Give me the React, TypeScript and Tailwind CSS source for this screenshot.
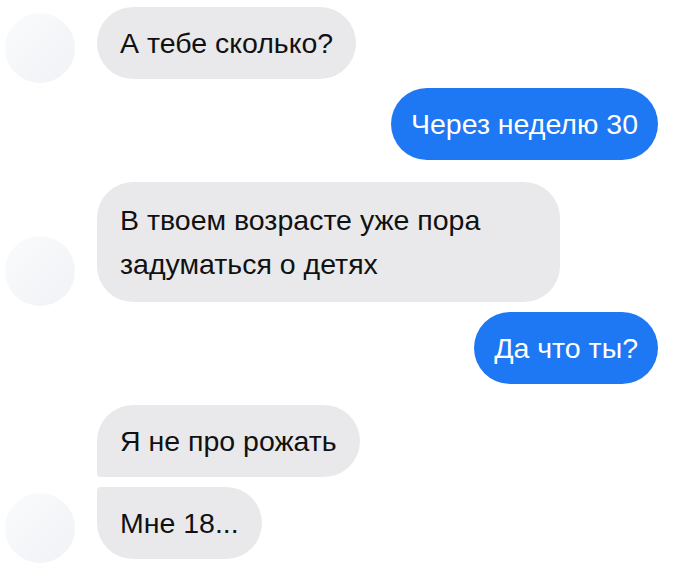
import React from "react";

type Msg = {
  text: string[];
  mine?: boolean;
  avatar?: boolean;
  extra?: string;
  gap: string;
};

const messages: Msg[] = [
  { text: ["А тебе сколько?"], avatar: true, gap: "mt-[7px]" },
  { text: ["Через неделю 30"], mine: true, gap: "mt-[9px]" },
  {
    text: ["В твоем возрасте уже пора", "задуматься о детях"],
    avatar: true,
    extra: "w-[463px] py-[16px]",
    gap: "mt-[22px]",
  },
  { text: ["Да что ты?"], mine: true, gap: "mt-[10px]" },
  { text: ["Я не про рожать"], extra: "rounded-bl-[4px]", gap: "mt-[21px]" },
  {
    text: ["Мне 18..."],
    avatar: true,
    extra: "rounded-tl-[4px]",
    gap: "mt-[10px]",
  },
];

function Avatar({ show }: { show?: boolean }) {
  if (!show) return <div className="w-[70px] shrink-0" />;
  return (
    <div className="w-[70px] h-[70px] shrink-0 rounded-full bg-gradient-to-br from-[#fafbfc] to-[#f0f2f6] mb-[-4px]" />
  );
}

function Bubble({ msg }: { msg: Msg }) {
  const tone = msg.mine
    ? "bg-[#1e77f3] text-white px-[20px]"
    : "bg-[#e9e9eb] text-[#111111] px-[23px]";
  return (
    <div
      className={`rounded-[36px] py-[14px] text-[28.5px] leading-[44px] ${tone} ${msg.extra ?? ""}`}
    >
      {msg.text.map((line) => (
        <div key={line} className="whitespace-nowrap">
          {line}
        </div>
      ))}
    </div>
  );
}

export default function App() {
  return (
    <div
      className="w-[700px] h-[580px] bg-white overflow-hidden flex flex-col"
      style={{ fontFamily: '"Liberation Sans", Arial, sans-serif' }}
    >
      {messages.map((msg, i) =>
        msg.mine ? (
          <div key={i} className={`flex justify-end pr-[42px] ${msg.gap}`}>
            <Bubble msg={msg} />
          </div>
        ) : (
          <div key={i} className={`flex items-end pl-[5px] gap-[22px] ${msg.gap}`}>
            <Avatar show={msg.avatar} />
            <Bubble msg={msg} />
          </div>
        )
      )}
    </div>
  );
}
